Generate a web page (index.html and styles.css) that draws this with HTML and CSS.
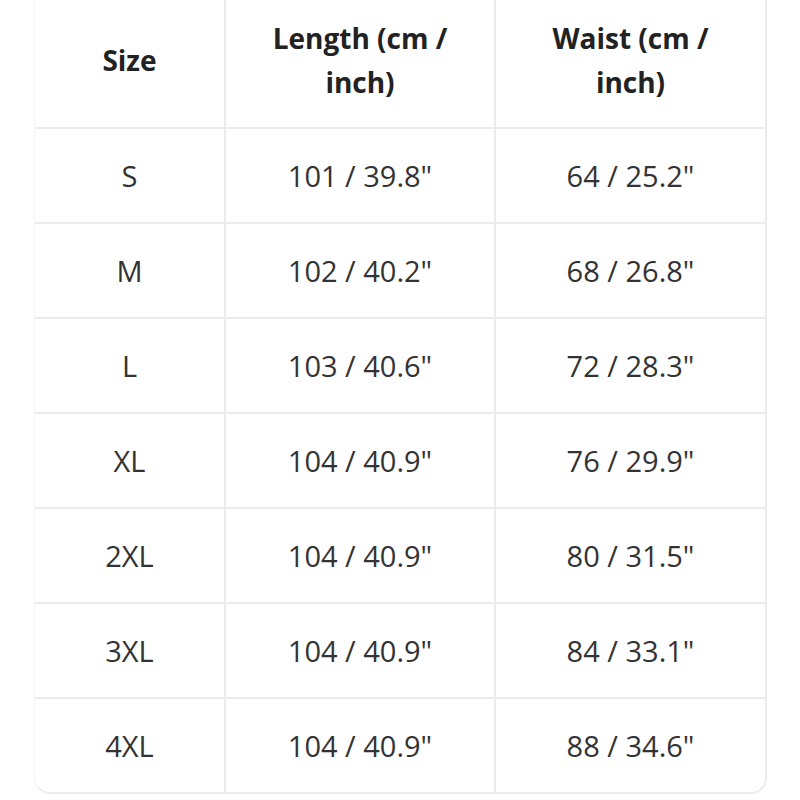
FILE: index.html
```html
<!DOCTYPE html>
<html>
<head>
<meta charset="utf-8">
<link rel="stylesheet" href="styles.css">
</head>
<body>
<div class="wrap">
  <table class="chart">
    <colgroup>
      <col class="c1"><col class="c2"><col class="c3">
    </colgroup>
    <thead>
      <tr>
        <th>Size</th>
        <th>Length (cm /<br>inch)</th>
        <th>Waist (cm /<br>inch)</th>
      </tr>
    </thead>
    <tbody>
      <tr><td>S</td><td>101 / 39.8"</td><td>64 / 25.2"</td></tr>
      <tr><td>M</td><td>102 / 40.2"</td><td>68 / 26.8"</td></tr>
      <tr><td>L</td><td>103 / 40.6"</td><td>72 / 28.3"</td></tr>
      <tr><td>XL</td><td>104 / 40.9"</td><td>76 / 29.9"</td></tr>
      <tr><td>2XL</td><td>104 / 40.9"</td><td>80 / 31.5"</td></tr>
      <tr><td>3XL</td><td>104 / 40.9"</td><td>84 / 33.1"</td></tr>
      <tr><td>4XL</td><td>104 / 40.9"</td><td>88 / 34.6"</td></tr>
    </tbody>
  </table>
</div>
</body>
</html>
```

FILE: styles.css
```css
html, body {
  margin: 0;
  padding: 0;
  background: #ffffff;
}
body {
  font-family: "Open Sans", "Noto Sans", "Liberation Sans", sans-serif;
  color: #333333;
}
.wrap {
  margin-left: 34px;
  width: 730px;
  border-right: 2px solid #ececec;
  border-bottom: 2px solid #ececec;
  border-left: 1px solid #f6f6f6;
  border-bottom-left-radius: 16px;
  border-bottom-right-radius: 16px;
  overflow: hidden;
}
.chart {
  width: 100%;
  border-collapse: collapse;
  table-layout: fixed;
}
.c1 { width: 190px; }
.c2 { width: 270px; }
.c3 { width: 270px; }
.chart th, .chart td {
  text-align: center;
  vertical-align: middle;
  padding: 0;
}
.chart th {
  height: 128px;
  font-weight: 700;
  font-size: 28px;
  line-height: 44px;
  color: #222222;
  padding-bottom: 8px;
  box-sizing: border-box;
}
.chart td {
  height: 93px;
  font-size: 29px;
  color: #333333;
}
.chart th + th, .chart td + td {
  border-left: 2px solid #ececec;
}
.chart thead tr {
  border-bottom: 2px solid #ececec;
}
.chart tbody tr + tr {
  border-top: 2px solid #ececec;
}
```
